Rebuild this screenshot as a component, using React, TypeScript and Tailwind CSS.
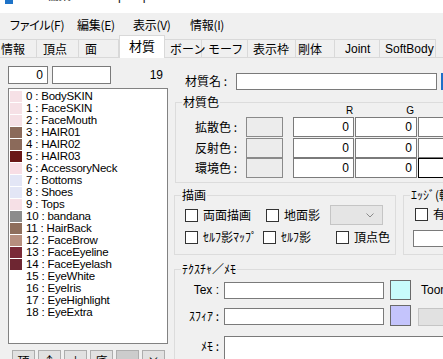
import React from "react";

const materials: { name: string; color?: string }[] = [
  { name: "BodySKIN", color: "#f6e1e6" },
  { name: "FaceSKIN", color: "#f6e1e6" },
  { name: "FaceMouth", color: "#f6e1e6" },
  { name: "HAIR01", color: "#8b6a5a" },
  { name: "HAIR02", color: "#8b6a5a" },
  { name: "HAIR03", color: "#6a1717" },
  { name: "AccessoryNeck", color: "#f8dee5" },
  { name: "Bottoms", color: "#e3e6f6" },
  { name: "Shoes", color: "#e3e6f6" },
  { name: "Tops", color: "#f6e0e6" },
  { name: "bandana", color: "#8c8c8c" },
  { name: "HairBack", color: "#8e6e5c" },
  { name: "FaceBrow", color: "#b68f7f" },
  { name: "FaceEyeline", color: "#7a2a38" },
  { name: "FaceEyelash", color: "#6e2632" },
  { name: "EyeWhite" },
  { name: "EyeIris" },
  { name: "EyeHighlight" },
  { name: "EyeExtra" },
];

const tabs = [
  { label: "情報", w: "w-[37px] pl-[1px]" },
  { label: "頂点", w: "w-[42px] pl-[6px]" },
  { label: "面", w: "w-[40px] pl-[6px]" },
  { label: "材質", w: "w-[46px] pl-[9px]", active: true },
  { label: "ボーン", w: "w-[37px] pl-[5px]" },
  { label: "モーフ", w: "w-[46px] pl-[6px]" },
  { label: "表示枠", w: "w-[48px] pl-[5px]" },
  { label: "剛体", w: "w-[39px] pl-[2px]" },
  { label: "Joint", w: "w-[45px] pl-[10px]" },
  { label: "SoftBody", w: "w-[56px] pl-[5px]" },
];

const Check = ({ label, className = "" }: { label: string; className?: string }) => (
  <div className={`flex items-center gap-[5px] shrink-0 ${className}`}>
    <span className="w-[13px] h-[13px] border border-[#333] bg-white shrink-0" />
    <span className="whitespace-nowrap">{label}</span>
  </div>
);

const Group = ({
  title,
  className = "",
  children,
}: {
  title: string;
  className?: string;
  children?: React.ReactNode;
}) => (
  <div className={`relative border border-[#dcdcdc] shrink-0 ${className}`}>
    <span className="absolute -top-[9px] left-[6px] bg-[#f0f0f0] px-[1px] leading-[16px] whitespace-nowrap">
      {title}
    </span>
    {children}
  </div>
);

const Field = ({ className = "", value }: { className?: string; value?: string }) => (
  <div
    className={`bg-white border border-[#7a7a7a] flex items-center justify-end pr-[4px] font-['Liberation_Sans',sans-serif] text-[12px] shrink-0 ${className}`}
  >
    {value}
  </div>
);

export default function App() {
  return (
    <div className="w-[443px] h-[359px] overflow-hidden bg-[#f0f0f0] text-[12px] text-black font-['Noto_Sans_CJK_JP',sans-serif] leading-[14px]">
      {/* title bar, cut off at the top */}
      <div className="h-[13px] bg-white overflow-hidden flex">
        <div className="w-[8px] h-[4px] bg-[#1e73c8] ml-[5px]" />
        <div className="ml-[9px] -mt-[13px] text-[12px] leading-[16px] text-[#222] whitespace-nowrap">
          Pmx編集 - ZamEsprix.pmx
        </div>
      </div>

      {/* menu */}
      <div className="h-[23px] flex items-center [font-feature-settings:'palt'] tracking-[-0.3px]">
        <span className="ml-[10px] w-[67px]">ファイル(F)</span>
        <span className="w-[56px]">編集(E)</span>
        <span className="w-[57px]">表示(V)</span>
        <span>情報(I)</span>
      </div>

      {/* tabs */}
      <div className="h-[22px] flex items-end border-b border-[#d9d9d9]">
        {tabs.map((t) =>
          t.active ? (
            <div
              key={t.label}
              className={`${t.w} h-[23px] -mb-[1px] bg-white border-x border-t border-[#d9d9d9] flex items-center text-[13px] pb-[2px] shrink-0`}
            >
              {t.label}
            </div>
          ) : (
            <div
              key={t.label}
              className={`${t.w} h-[18px] border-r border-t border-[#d9d9d9] flex items-center text-[12px] whitespace-nowrap shrink-0 ${
                t.label === "Joint" || t.label === "SoftBody" ? "font-['Liberation_Sans',sans-serif]" : ""
              }`}
            >
              {t.label}
            </div>
          )
        )}
      </div>

      <div className="flex">
        {/* left: material list */}
        <div className="w-[170px] shrink-0">
          <div className="flex items-center mt-[8px] h-[18px]">
            <Field className="ml-[8px] w-[40px] h-[18px]" value="0" />
            <Field className="ml-[4px] w-[59px] h-[18px]" />
            <span className="ml-auto mr-[7px] font-['Liberation_Sans',sans-serif]">19</span>
          </div>
          <div className="mt-[4px] ml-[8px] w-[160px] h-[256px] bg-white border border-[#828282] pt-[1px] pl-[1px] font-['Liberation_Sans',sans-serif] text-[11.5px] tracking-[-0.2px]">
            {materials.map((m, i) => (
              <div key={i} className="flex items-center h-[12px] overflow-hidden">
                <span
                  className="w-[12px] h-[11px] shrink-0"
                  style={{ backgroundColor: m.color ?? "transparent" }}
                />
                <span className="ml-[4px] whitespace-nowrap leading-[12px]">
                  {i} : {m.name}
                </span>
              </div>
            ))}
          </div>
          <div className="flex mt-[6px] ml-[12px] gap-[3px]">
            {["頂", "↑", "↓", "底", "", "×"].map((b, i) => (
              <div
                key={i}
                className={`w-[23px] h-[22px] border border-[#adadad] flex items-center justify-center ${
                  i === 4 ? "bg-[#cccccc]" : "bg-[#e1e1e1]"
                }`}
              >
                {b}
              </div>
            ))}
          </div>
        </div>

        {/* right: material properties */}
        <div className="flex-1 min-w-0">
          <div className="flex items-center mt-[15px] h-[16px]">
            <span className="ml-[15px] w-[51px] whitespace-nowrap shrink-0">材質名 :</span>
            <div className="w-[201px] h-[17px] bg-white border border-[#7a7a7a] shrink-0" />
            <div className="ml-[4px] w-[10px] h-[17px] border-l-[2px] border-[#1e6fc8] bg-[#e5f1fb] shrink-0" />
          </div>

          <Group title="材質色" className="mt-[13px] ml-[5px] w-[330px] h-[81px]">
            <div className="flex h-[11px] mt-[3px] text-[10px] leading-[10px] font-['Liberation_Sans',sans-serif]">
              <span className="ml-[170px]">R</span>
              <span className="ml-[53px]">G</span>
            </div>
            {[
              ["拡散色 :", ""],
              ["反射色 :", ""],
              ["環境色 :", "focus"],
            ].map(([label, f]) => (
              <div key={label} className="flex items-center h-[20px] mb-[0.5px]">
                <span className="w-[61px] text-right whitespace-nowrap shrink-0">{label}</span>
                <div className="ml-[9px] w-[37px] h-[20px] bg-[#ececec] border border-[#8a8a8a] shrink-0" />
                <Field className="ml-[10px] w-[61px] h-[20px]" value="0" />
                <Field className="ml-[1px] w-[62px] h-[20px]" value="0" />
                <Field
                  className={`ml-[1px] w-[62px] h-[20px] ${f ? "border-black" : ""}`}
                />
              </div>
            ))}
          </Group>

          <div className="flex mt-[12px] ml-[4px]">
            <Group title="描画" className="w-[222px] h-[60px]">
              <div className="flex items-center mt-[9px] ml-[10px] h-[20px]">
                <Check label="両面描画" className="w-[81px]" />
                <Check label="地面影" className="w-[64px]" />
                <div className="w-[53px] h-[20px] bg-[#e5e5e5] border border-[#c5c5c5] flex items-center justify-end pr-[8px] shrink-0">
                  <svg width="8" height="5" viewBox="0 0 8 5">
                    <path d="M0.5 0.5 L4 4 L7.5 0.5" fill="none" stroke="#8a8a8a" strokeWidth="1" />
                  </svg>
                </div>
              </div>
              <div className="flex items-center mt-[5px] ml-[10px] h-[14px]">
                <Check label="ｾﾙﾌ影ﾏｯﾌﾟ" className="w-[78px]" />
                <Check label="ｾﾙﾌ影" className="w-[73px]" />
                <Check label="頂点色" />
              </div>
            </Group>
            <Group title="ｴｯｼﾞ(輪郭)" className="ml-[7px] w-[100px] h-[60px]">
              <Check label="有効" className="mt-[11px] ml-[11px]" />
              <div className="mt-[9px] ml-[9px] w-[80px] h-[17px] bg-white border border-[#7a7a7a]" />
            </Group>
          </div>

          <Group title="ﾃｸｽﾁｬ／ﾒﾓ" className="mt-[14px] ml-[4px] w-[300px] h-[100px]">
            <div className="flex items-center mt-[10px] h-[20px]">
              <span className="w-[44px] text-right font-['Liberation_Sans',sans-serif] shrink-0">Tex :</span>
              <div className="ml-[5px] w-[160px] h-[17px] bg-white border border-[#7a7a7a] shrink-0" />
              <div className="ml-[6px] w-[21px] h-[20px] bg-[#c8fcfc] border border-[#6a6a6a] shrink-0" />
              <span className="ml-[10px] font-['Liberation_Sans',sans-serif]">Toon</span>
            </div>
            <div className="flex items-center mt-[5px] h-[21px]">
              <span className="w-[44px] text-right whitespace-nowrap shrink-0">ｽﾌｨｱ :</span>
              <div className="ml-[5px] mt-[2px] w-[160px] h-[17px] bg-white border border-[#7a7a7a] shrink-0" />
              <div className="ml-[6px] w-[21px] h-[21px] bg-[#c4c4fc] border border-[#6a6a6a] shrink-0" />
              <div className="ml-[7px] mt-[3px] w-[40px] h-[18px] bg-[#e1e1e1] border border-[#c5c5c5] shrink-0" />
            </div>
            <div className="flex items-start mt-[10px]">
              <span className="w-[44px] text-right mt-[3px] shrink-0">ﾒﾓ :</span>
              <div className="ml-[5px] w-[240px] h-[40px] bg-white border border-[#7a7a7a] shrink-0" />
            </div>
          </Group>
        </div>
      </div>
    </div>
  );
}
